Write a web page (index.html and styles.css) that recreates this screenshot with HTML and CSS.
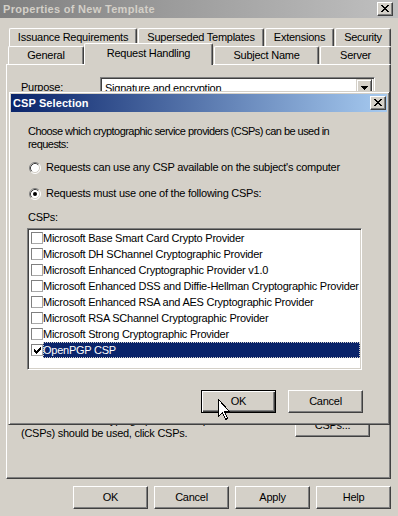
FILE: index.html
```html
<!DOCTYPE html>
<html lang="en">
<head>
<meta charset="utf-8">
<title>Properties of New Template</title>
<link rel="stylesheet" href="styles.css">
</head>
<body>
<div class="window">
  <div class="titlebar">
    <span class="title">Properties of New Template</span>
    <span class="capbtn"><svg width="8" height="7" viewBox="0 0 8 7" shape-rendering="crispEdges"><path d="M0 0h2v1H0z M6 0h2v1H6z M1 1h2v1H1z M5 1h2v1H5z M2 2h4v1H2z M3 3h2v1H3z M2 4h4v1H2z M1 5h2v1H1z M5 5h2v1H5z M0 6h2v1H0z M6 6h2v1H6z" fill="#000"/></svg></span>
  </div>
  <div class="tabs">
    <div class="tabrow row1">
      <div class="tab t-iss">Issuance Requirements</div>
      <div class="tab t-sup">Superseded Templates</div>
      <div class="tab t-ext">Extensions</div>
      <div class="tab t-sec">Security</div>
    </div>
    <div class="tabrow row2">
      <div class="tab t-gen">General</div>
      <div class="tab t-req active">Request Handling</div>
      <div class="tab t-sub">Subject Name</div>
      <div class="tab t-srv">Server</div>
    </div>
  </div>
  <div class="panel">
    <div class="purpose">
      <span class="lbl">Purpose:</span>
      <div class="combo">
        <span class="combotext">Signature and encryption</span>
        <span class="dropbtn"><svg width="7" height="4" viewBox="0 0 7 4" shape-rendering="crispEdges"><path d="M0 0h7v1H0z M1 1h5v1H1z M2 2h3v1H2z M3 3h1v1H3z" fill="#000"/></svg></span>
      </div>
    </div>
    <div class="cspinfo">
      <div class="csptext">
        <div>To choose which cryptographic service providers</div>
        <div>(CSPs) should be used, click CSPs.</div>
      </div>
      <div class="btn cspbtn">CSPs...</div>
    </div>
  </div>
  <div class="footer">
    <div class="btn">OK</div>
    <div class="btn">Cancel</div>
    <div class="btn">Apply</div>
    <div class="btn">Help</div>
  </div>
</div>

<div class="dialog">
  <div class="dtitle">
    <span class="dtext">CSP Selection</span>
    <span class="capbtn"><svg width="8" height="7" viewBox="0 0 8 7" shape-rendering="crispEdges"><path d="M0 0h2v1H0z M6 0h2v1H6z M1 1h2v1H1z M5 1h2v1H5z M2 2h4v1H2z M3 3h2v1H3z M2 4h4v1H2z M1 5h2v1H1z M5 5h2v1H5z M0 6h2v1H0z M6 6h2v1H6z" fill="#000"/></svg></span>
  </div>
  <div class="dbody">
    <div class="intro">
      <div>Choose which cryptographic service providers (CSPs) can be used in</div>
      <div>requests:</div>
    </div>
    <div class="radio r1">
      <svg class="rdot" width="12" height="12" viewBox="0 0 12 12">
        <circle cx="6" cy="6" r="5" fill="#fff"/>
        <path d="M2.11 9.89A5.5 5.5 0 0 1 9.89 2.11" fill="none" stroke="#808080"/>
        <path d="M9.89 2.11A5.5 5.5 0 0 1 2.11 9.89" fill="none" stroke="#fff"/>
        <path d="M2.82 9.18A4.5 4.5 0 0 1 9.18 2.82" fill="none" stroke="#404040"/>
        <path d="M9.18 2.82A4.5 4.5 0 0 1 2.82 9.18" fill="none" stroke="#d4d0c8"/>
      </svg>
      <span>Requests can use any CSP available on the subject's computer</span>
    </div>
    <div class="radio r2">
      <svg class="rdot" width="12" height="12" viewBox="0 0 12 12">
        <circle cx="6" cy="6" r="5" fill="#fff"/>
        <path d="M2.11 9.89A5.5 5.5 0 0 1 9.89 2.11" fill="none" stroke="#808080"/>
        <path d="M9.89 2.11A5.5 5.5 0 0 1 2.11 9.89" fill="none" stroke="#fff"/>
        <path d="M2.82 9.18A4.5 4.5 0 0 1 9.18 2.82" fill="none" stroke="#404040"/>
        <path d="M9.18 2.82A4.5 4.5 0 0 1 2.82 9.18" fill="none" stroke="#d4d0c8"/>
        <circle cx="6" cy="6" r="2" fill="#000"/>
      </svg>
      <span>Requests must use one of the following CSPs:</span>
    </div>
    <div class="listlbl">CSPs:</div>
    <div class="listbox">
      <div class="item"><span class="cb"></span><span class="itext">Microsoft Base Smart Card Crypto Provider</span></div>
      <div class="item"><span class="cb"></span><span class="itext">Microsoft DH SChannel Cryptographic Provider</span></div>
      <div class="item"><span class="cb"></span><span class="itext">Microsoft Enhanced Cryptographic Provider v1.0</span></div>
      <div class="item"><span class="cb"></span><span class="itext">Microsoft Enhanced DSS and Diffie-Hellman Cryptographic Provider</span></div>
      <div class="item"><span class="cb"></span><span class="itext">Microsoft Enhanced RSA and AES Cryptographic Provider</span></div>
      <div class="item"><span class="cb"></span><span class="itext">Microsoft RSA SChannel Cryptographic Provider</span></div>
      <div class="item"><span class="cb"></span><span class="itext">Microsoft Strong Cryptographic Provider</span></div>
      <div class="item sel"><span class="cb"><svg width="7" height="7" viewBox="0 0 7 7" shape-rendering="crispEdges"><path d="M6 0h1v1H6z M5 1h2v1H5z M0 2h1v1H0z M4 2h3v1H4z M0 3h2v1H0z M3 3h3v1H3z M0 4h5v1H0z M1 5h3v1H1z M2 6h1v1H2z" fill="#000"/></svg></span><span class="itext">OpenPGP CSP</span></div>
    </div>
    <div class="dbuttons">
      <div class="btn default">OK</div>
      <div class="btn">Cancel</div>
    </div>
  </div>
</div>

<svg class="cursor" width="13" height="21" viewBox="0 0 13 21" shape-rendering="crispEdges">
  <path d="M0.5 0.5V17.5L4.5 13.5L7.5 20.5L9.5 19.5L6.5 12.5H11.5Z" fill="#fff" stroke="#000" stroke-linejoin="miter"/>
</svg>
</body>
</html>
```

FILE: styles.css
```css
* { box-sizing: border-box; }
html, body { margin: 0; padding: 0; }
body {
  width: 398px;
  height: 516px;
  overflow: hidden;
  position: relative;
  background: #d4d0c8;
  font-family: "Liberation Sans", Arial, sans-serif;
  font-size: 11px;
  letter-spacing: -0.25px;
  color: #000;
}

.window { display: flex; flex-direction: column; height: 516px; }

.titlebar {
  height: 18px;
  display: flex;
  align-items: center;
  justify-content: space-between;
  padding: 0 5px 0 3px;
  background: linear-gradient(to right, #808080, #c0c0c0);
}
.title { font-weight: bold; color: #d4d0c8; letter-spacing: 0.3px; }

.capbtn {
  width: 16px;
  height: 14px;
  display: flex;
  align-items: center;
  justify-content: center;
  background: #d4d0c8;
  border: 1px solid;
  border-color: #fff #404040 #404040 #fff;
  box-shadow: inset -1px -1px #808080;
  padding: 0 1px 1px 0;
}

/* tabs */
.tabs { padding-top: 10px; }
.tabrow { display: flex; height: 18px; }
.row1 { padding-left: 9px; gap: 1px; }
.row2 { padding-left: 8px; position: relative; z-index: 1; }
.tab {
  height: 18px;
  display: flex;
  align-items: center;
  justify-content: center;
  border-left: 1px solid #fff;
  border-top: 1px solid #fff;
  border-right: 1px solid #404040;
  box-shadow: inset -1px 0 #808080;
  border-radius: 2px 2px 0 0;
  background: #d4d0c8;
  padding-bottom: 1px;
}
.t-iss { width: 128px; }
.t-sup { width: 126px; }
.t-ext { width: 69px; }
.t-sec { width: 56px; }
.t-gen { width: 76px; }
.t-req { width: 129px; }
.t-sub { width: 105px; margin-left: 1px; }
.t-srv { width: 71px; margin-left: 1px; }
.tab.active {
  height: 22px;
  margin-top: -3px;
  padding-bottom: 3px;
  margin-bottom: -1px;
  position: relative;
  z-index: 2;
}

/* panel */
.panel {
  margin: 0 7px 0 6px;
  height: 415px;
  border: 1px solid;
  border-color: #fff #404040 #404040 #fff;
  box-shadow: inset -1px -1px #808080;
  padding: 12px 0 0 14px;
  display: flex;
  flex-direction: column;
}
.purpose { display: flex; align-items: center; height: 21px; }
.lbl { width: 79px; margin-top: -2px; }
.combo {
  width: 275px;
  height: 21px;
  display: flex;
  align-items: center;
  justify-content: space-between;
  background: #fff;
  border: 1px solid;
  border-color: #808080 #fff #fff #808080;
  box-shadow: inset 1px 1px #404040, inset -1px -1px #d4d0c8;
  padding: 2px 2px 2px 4px;
}
.dropbtn {
  width: 16px;
  height: 17px;
  display: flex;
  align-items: center;
  justify-content: center;
  background: #d4d0c8;
  border: 1px solid;
  border-color: #d4d0c8 #404040 #404040 #d4d0c8;
  box-shadow: inset 1px 1px #fff, inset -1px -1px #808080;
}

.cspinfo {
  margin-top: 316px;
  display: flex;
  justify-content: space-between;
  align-items: flex-start;
  padding-right: 20px;
}
.csptext { line-height: 13px; }

.btn {
  width: 75px;
  height: 23px;
  display: flex;
  align-items: center;
  justify-content: center;
  background: #d4d0c8;
  border: 1px solid;
  border-color: #fff #404040 #404040 #fff;
  box-shadow: inset -1px -1px #808080;
  padding-bottom: 1px;
}

.footer {
  display: flex;
  justify-content: flex-end;
  gap: 6px;
  padding-right: 7px;
  margin-top: 7px;
}

/* dialog */
.dialog {
  position: absolute;
  left: 8px;
  top: 91px;
  width: 382px;
  height: 334px;
  border: 1px solid;
  border-color: #d4d0c8 #404040 #404040 #d4d0c8;
  box-shadow: inset 1px 1px #fff, inset -1px -1px #808080;
  padding: 2px;
  background: #d4d0c8;
}
.dtitle {
  height: 18px;
  display: flex;
  align-items: center;
  justify-content: space-between;
  padding: 0 1px 0 2px;
  background: linear-gradient(to right, #0a246a, #a6caf0);
}
.dtext { color: #fff; font-weight: bold; letter-spacing: 0.1px; }

.dbody { padding: 0 0 0 17px; line-height: 13px; }
.intro { margin-top: 13px; letter-spacing: -0.55px; }
.radio { display: flex; align-items: center; height: 13px; gap: 5px; margin-left: 1px; }
.r1 { margin-top: 10px; }
.r2 { margin-top: 13px; }
.rdot { flex: none; }
.listlbl { margin-top: 11px; }

.listbox {
  margin-top: 4px;
  margin-left: -1px;
  width: 335px;
  height: 142px;
  background: #fff;
  border: 1px solid;
  border-color: #808080 #fff #fff #808080;
  box-shadow: inset 1px 1px #404040, inset -1px -1px #d4d0c8;
  padding: 1px 1px 0 2px;
}
.item { display: flex; align-items: center; height: 16px; }
.cb {
  flex: none;
  width: 12px;
  height: 12px;
  margin-left: 1px;
  margin-right: 0;
  border: 1px solid;
  border-color: #808080 #a8a8a8 #a8a8a8 #808080;
  background: #fff;
  display: flex;
  align-items: center;
  justify-content: center;
}
.itext { flex: 1; height: 16px; line-height: 16px; white-space: nowrap; }
.sel .itext {
  background: #0a246a;
  color: #fff;
  outline: 1px dotted #d4d0c8;
  outline-offset: -1px;
}

.dbuttons {
  display: flex;
  justify-content: flex-end;
  gap: 12px;
  padding-right: 24px;
  margin-top: 20px;
}
.btn.default {
  border: 1px solid #000;
  box-shadow: inset 1px 1px #fff, inset -1px -1px #404040, inset -2px -2px #808080;
}

.cursor { position: absolute; left: 218px; top: 399px; }
```
